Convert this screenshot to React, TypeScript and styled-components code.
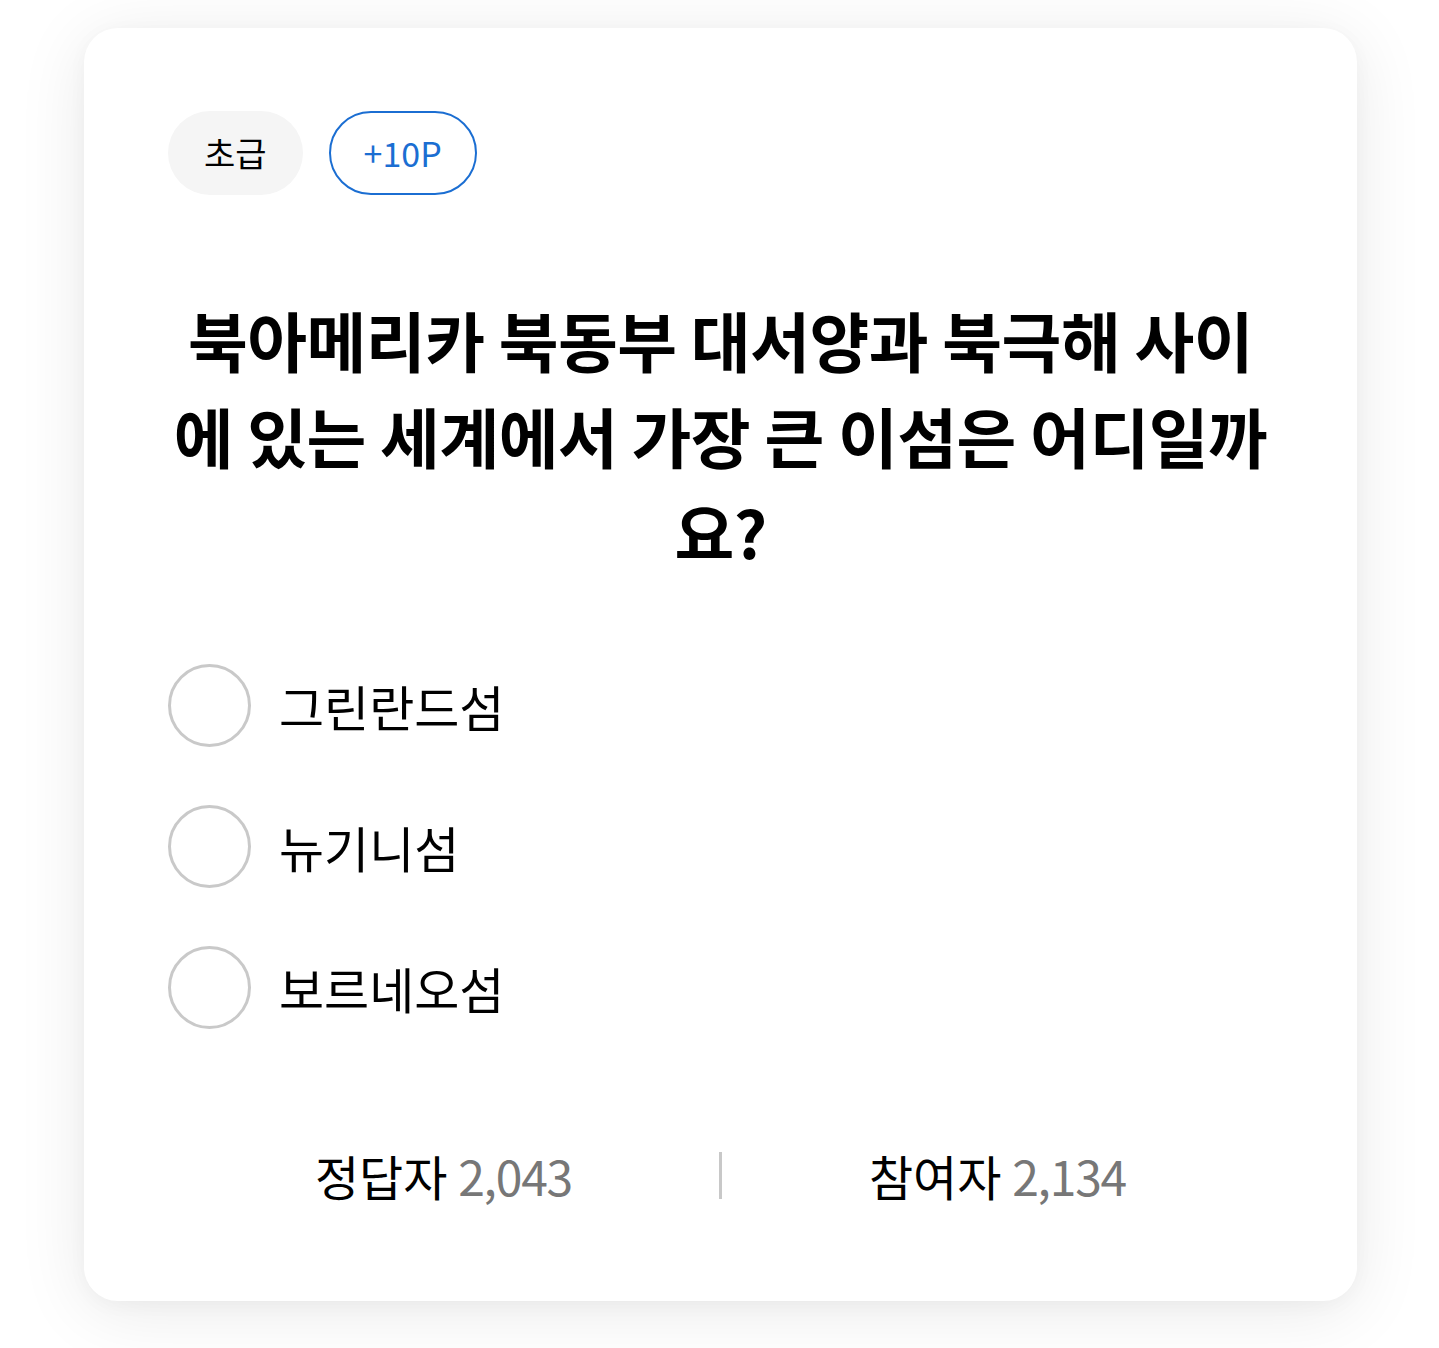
import React from "react";
import styled, { createGlobalStyle } from "styled-components";

const Global = createGlobalStyle`
  html, body { margin: 0; padding: 0; background: #ffffff; }
  body { font-family: "Noto Sans CJK KR", "Noto Sans", sans-serif; color: #000; }
  * { box-sizing: border-box; }
`;

const Page = styled.div`
  padding: 28px 82px 48px 84px;
`;

const Card = styled.div`
  background: #fff;
  border-radius: 34px;
  box-shadow: 0 10px 70px rgba(0, 0, 0, 0.09), 0 4px 20px rgba(0, 0, 0, 0.03);
  padding: 83px 84px 96px;
  display: flex;
  flex-direction: column;
`;

const Tags = styled.div`
  display: flex;
  gap: 26px;
`;

const Tag = styled.span<{ $variant: "level" | "point" }>`
  height: 84px;
  display: inline-flex;
  align-items: center;
  justify-content: center;
  border-radius: 42px;
  font-size: 34px;
  line-height: 1;
  padding: 0 ${(p) => (p.$variant === "level" ? "36px" : "33px")};
  background: ${(p) => (p.$variant === "level" ? "#f5f5f5" : "#fff")};
  color: ${(p) => (p.$variant === "level" ? "#000" : "#1b6ed2")};
  border: ${(p) => (p.$variant === "level" ? "none" : "2.5px solid #1b6ed2")};
`;

const Question = styled.h1`
  margin: 96px 0 0;
  font-size: 65px;
  font-weight: 700;
  line-height: 96px;
  text-align: center;
  letter-spacing: -0.5px;
  color: #000;
`;

const Options = styled.div`
  margin-top: 85px;
  display: flex;
  flex-direction: column;
  gap: 58px;
`;

const Option = styled.label`
  display: flex;
  align-items: center;
  gap: 28px;
  cursor: pointer;
`;

const Radio = styled.span`
  width: 83px;
  height: 83px;
  border-radius: 50%;
  border: 3px solid #c9c9c9;
  flex-shrink: 0;
`;

const OptionText = styled.span`
  font-size: 49px;
  line-height: 1;
  color: #000;
`;

const Stats = styled.div`
  margin-top: 116px;
  display: flex;
  align-items: center;
  height: 60px;
`;

const Stat = styled.div`
  flex: 1;
  text-align: center;
  font-size: 48px;
  line-height: 60px;
  color: #000;
`;

const Count = styled.span`
  color: #777;
  letter-spacing: -1.2px;
`;

const Divider = styled.span`
  width: 3px;
  height: 47px;
  background: #c8c8c8;
`;

const options = ["그린란드섬", "뉴기니섬", "보르네오섬"];

export default function App() {
  return (
    <>
      <Global />
      <Page>
        <Card>
          <Tags>
            <Tag $variant="level">초급</Tag>
            <Tag $variant="point">+10P</Tag>
          </Tags>
          <Question>
            북아메리카 북동부 대서양과 북극해 사이에 있는 세계에서 가장 큰 이섬은 어디일까요?
          </Question>
          <Options>
            {options.map((o) => (
              <Option key={o}>
                <Radio />
                <OptionText>{o}</OptionText>
              </Option>
            ))}
          </Options>
          <Stats>
            <Stat>
              정답자 <Count>2,043</Count>
            </Stat>
            <Divider />
            <Stat>
              참여자 <Count>2,134</Count>
            </Stat>
          </Stats>
        </Card>
      </Page>
    </>
  );
}
